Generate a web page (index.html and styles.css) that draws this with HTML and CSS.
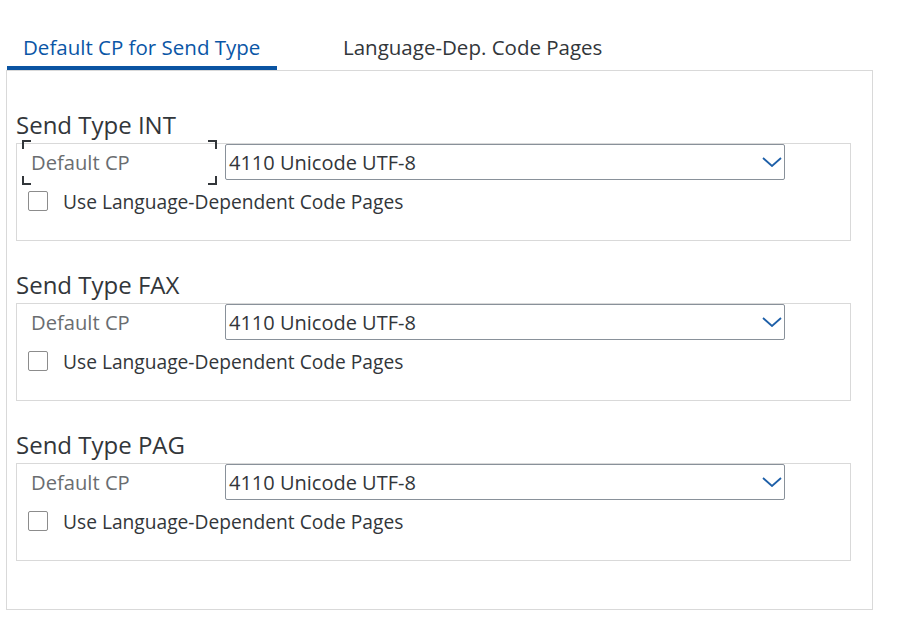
FILE: index.html
```html
<!DOCTYPE html>
<html>
<head>
<meta charset="utf-8">
<link rel="stylesheet" href="styles.css">
</head>
<body>
<div class="tabs">
  <div class="tab active">Default CP for Send Type</div>
  <div class="tab">Language-Dep. Code Pages</div>
</div>
<div class="panel">
  <section class="group">
    <div class="group-title">Send Type INT</div>
    <div class="group-box">
      <div class="field-row">
        <div class="field-label focused">Default CP
          <span class="corner tl"></span><span class="corner tr"></span><span class="corner bl"></span><span class="corner br"></span>
        </div>
        <div class="select"><span class="select-value">4110 Unicode UTF-8</span>
          <svg class="chevron" width="20" height="10" viewBox="0 0 20 10"><path d="M1 1 L10 9 L19 1" fill="none" stroke="#1d5fa8" stroke-width="1.8"/></svg>
        </div>
      </div>
      <label class="check-row"><span class="checkbox"></span><span class="check-label">Use Language-Dependent Code Pages</span></label>
    </div>
  </section>
  <section class="group">
    <div class="group-title">Send Type FAX</div>
    <div class="group-box">
      <div class="field-row">
        <div class="field-label">Default CP</div>
        <div class="select"><span class="select-value">4110 Unicode UTF-8</span>
          <svg class="chevron" width="20" height="10" viewBox="0 0 20 10"><path d="M1 1 L10 9 L19 1" fill="none" stroke="#1d5fa8" stroke-width="1.8"/></svg>
        </div>
      </div>
      <label class="check-row"><span class="checkbox"></span><span class="check-label">Use Language-Dependent Code Pages</span></label>
    </div>
  </section>
  <section class="group">
    <div class="group-title">Send Type PAG</div>
    <div class="group-box">
      <div class="field-row">
        <div class="field-label">Default CP</div>
        <div class="select"><span class="select-value">4110 Unicode UTF-8</span>
          <svg class="chevron" width="20" height="10" viewBox="0 0 20 10"><path d="M1 1 L10 9 L19 1" fill="none" stroke="#1d5fa8" stroke-width="1.8"/></svg>
        </div>
      </div>
      <label class="check-row"><span class="checkbox"></span><span class="check-label">Use Language-Dependent Code Pages</span></label>
    </div>
  </section>
</div>
</body>
</html>
```
FILE: styles.css
```css
* { box-sizing: border-box; }
html, body { margin: 0; padding: 0; background: #fff; }
body {
  width: 899px;
  height: 641px;
  font-family: "Open Sans", "Noto Sans", sans-serif;
  color: #32363a;
  overflow: hidden;
}
.tabs {
  display: flex;
  padding-left: 7px;
  height: 71px;
  padding-top: 30px;
}
.tab {
  font-size: 20.5px;
  height: 40px;
  line-height: 35px;
  padding: 0 16px;
  color: #32363a;
  white-space: nowrap;
}
.tab.active {
  color: #0a56a6;
  border-bottom: 4px solid #0a54a2;
  width: 270px;
}
.tab + .tab { margin-left: 50px; }
.panel {
  margin-left: 6px;
  margin-top: -1px;
  width: 867px;
  height: 540px;
  border: 1px solid #d9d9d9;
  padding-top: 37px;
  padding-left: 9px;
}
.group { height: 160px; }
.group-title {
  font-size: 24px;
  height: 35px;
  line-height: 34px;
  white-space: nowrap;
}
.group-box {
  width: 835px;
  height: 98px;
  border: 1px solid #d9d9d9;
}
.field-row {
  display: flex;
  align-items: center;
  height: 37px;
}
.field-label {
  position: relative;
  width: 195px;
  margin-left: 5px;
  height: 37px;
  line-height: 36px;
  padding-left: 9px;
  font-size: 20.2px;
  color: #6a6d70;
}
.corner {
  position: absolute;
  width: 9px;
  height: 9px;
  border-color: #32363a;
  border-style: solid;
  border-width: 0;
}
.corner.tl { left: 0; top: -4px; border-left-width: 2px; border-top-width: 2px; }
.corner.tr { right: 0; top: -4px; border-right-width: 2px; border-top-width: 2px; }
.corner.bl { left: 0; bottom: -4px; border-left-width: 2px; border-bottom-width: 2px; }
.corner.br { right: 0; bottom: -4px; border-right-width: 2px; border-bottom-width: 2px; }
.select {
  margin-left: 8px;
  width: 560px;
  height: 36px;
  border: 1px solid #89919a;
  border-radius: 2px;
  display: flex;
  align-items: center;
  justify-content: space-between;
  padding-left: 3px;
  padding-right: 2px;
  align-self: flex-start;
}
.select-value { font-size: 20px; color: #32363a; white-space: nowrap; }
.chevron { display: block; }
.check-row {
  display: flex;
  align-items: center;
  margin-top: 10px;
  margin-left: 11px;
  height: 20px;
}
.checkbox {
  width: 20px;
  height: 20px;
  border: 1px solid #8c8c8c;
  border-radius: 2px;
  background: #fff;
  flex: none;
}
.check-label {
  margin-left: 15px;
  font-size: 19.2px;
  white-space: nowrap;
}
```
